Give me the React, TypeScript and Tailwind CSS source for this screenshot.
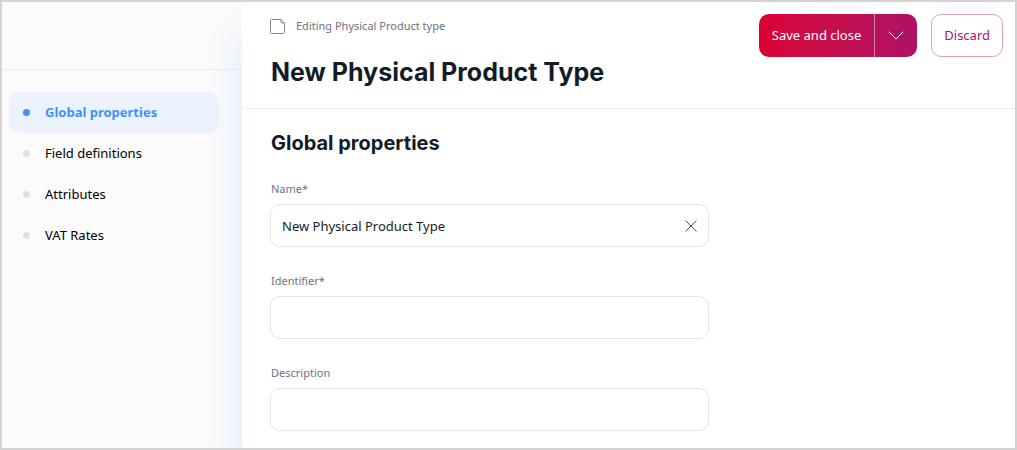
import { useState } from "react";

const sections = ["Global properties", "Field definitions", "Attributes", "VAT Rates"];

function PageIcon() {
  return (
    <svg width="15" height="15" viewBox="0 0 15 15" fill="none" stroke="#85858f" aria-hidden="true">
      <path d="M11 .5H1.500a1 1 0 0 0-1 1v12a1 1 0 0 0 1 1h12a1 1 0 0 0 1-1V4L11 .5V3a1 1 0 0 0 1 1h2.500" />
    </svg>
  );
}

function Sidebar({ active, onSelect }: { active: string; onSelect: (name: string) => void }) {
  return (
    <aside className="w-60 shrink-0 bg-[#fbfbfb]">
      <div className="h-17 border-b border-[#ebebed]" />
      <nav className="px-[7px] pt-[22px]" aria-label="Sections">
        <ul className="w-[210px]">
          {sections.map((name) => (
            <li key={name}>
              <a
                href="#"
                onClick={(event) => {
                  event.preventDefault();
                  onSelect(name);
                }}
                aria-current={name === active ? "page" : undefined}
                className={
                  name === active
                    ? "flex h-[41px] items-center gap-[15px] rounded-[10px] bg-[#ecf3ff] pl-[14px] text-[13px] font-bold text-[#4191ff]"
                    : "flex h-[41px] items-center gap-[15px] rounded-[10px] pl-[14px] text-[13px] text-black"
                }
              >
                <span
                  className={
                    name === active
                      ? "size-[7px] rounded-full bg-[#4191ff]"
                      : "size-[7px] rounded-full bg-[#e0e0e8]"
                  }
                />
                {name}
              </a>
            </li>
          ))}
        </ul>
      </nav>
    </aside>
  );
}

function Field({ id, label, initial = "" }: { id: string; label: string; initial?: string }) {
  const [value, setValue] = useState(initial);
  return (
    <div>
      <label htmlFor={id} className="block pl-px text-[11px] leading-4 text-[#6f717b]">
        {label}
      </label>
      <div className="mt-[7px] flex h-[43px] items-center rounded-[10px] border border-[#e4e4e6] bg-white px-[11px]">
        <input
          id={id}
          type="text"
          value={value}
          onChange={(event) => setValue(event.target.value)}
          className="h-full min-w-0 flex-1 bg-transparent text-[13px] text-[#131c26] outline-none"
        />
        {value && (
          <button type="button" aria-label={`Clear ${label}`} onClick={() => setValue("")}>
            <svg width="12" height="12" viewBox="0 0 12 12" stroke="#4b4f58" strokeLinecap="round" aria-hidden="true">
              <path d="M.8.8l10.400 10.400M11.200.8L.8 11.200" />
            </svg>
          </button>
        )}
      </div>
    </div>
  );
}

export default function App() {
  const [active, setActive] = useState(sections[0]);
  return (
    <div className="flex min-h-screen overflow-hidden border-2 border-[#d3d3d3] bg-white font-['Noto_Sans',sans-serif]">
      <Sidebar active={active} onSelect={setActive} />
      <main className="relative min-w-0 flex-1 bg-white shadow-[0_32px_40px_#dce8ff]">
        <header className="flex items-start justify-between gap-4 border-b border-[#efeff0] pt-3 pr-3 pl-[28px]">
          <div className="pt-[3px] pb-5">
            <div className="flex items-center gap-[11px] text-[11px] leading-[18px] text-[#6f717b]">
              <PageIcon />
              <span>Editing Physical Product type</span>
            </div>
            <h1 className="mt-[21px] pl-px font-['Inter',sans-serif] text-[25px] leading-8 font-bold text-[#131c26]">
              New Physical Product Type
            </h1>
          </div>
          <div className="flex shrink-0 gap-[14px] text-[13px]">
            <div className="flex h-[43px] overflow-hidden rounded-[10px] bg-linear-to-r from-[#db0032] to-[#ae1164] text-white">
              <button type="button" className="px-[13px]">
                Save and close
              </button>
              <button
                type="button"
                aria-label="More save options"
                className="flex w-[43px] items-center justify-center border-l border-[#dc7da4]"
              >
                <svg width="16" height="9" viewBox="0 0 16 9" fill="none" stroke="white" strokeLinecap="round" strokeLinejoin="round" aria-hidden="true">
                  <path d="M1 1l7 7 7-7" />
                </svg>
              </button>
            </div>
            <button type="button" className="h-[43px] rounded-[10px] border border-[#dfa0c1] px-3 text-[#ae1164]">
              Discard
            </button>
          </div>
        </header>
        <section className="pt-5 pr-3 pl-[28px]">
          <h2 className="pl-px font-['Inter',sans-serif] text-xl leading-7 font-bold text-[#131c26]">Global properties</h2>
          <form className="mt-6 flex max-w-[439px] flex-col gap-[26px]" onSubmit={(event) => event.preventDefault()}>
            <Field id="name" label="Name*" initial="New Physical Product Type" />
            <Field id="identifier" label="Identifier*" />
            <Field id="description" label="Description" />
          </form>
        </section>
      </main>
    </div>
  );
}
